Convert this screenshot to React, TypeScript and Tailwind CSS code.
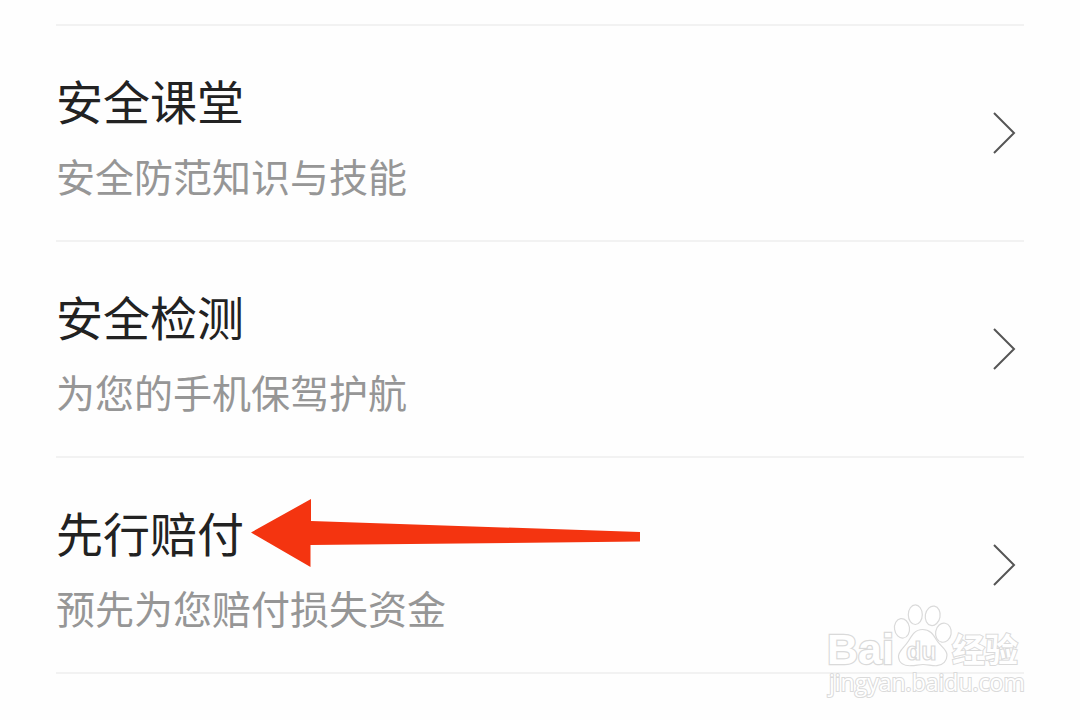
interface MenuItem {
  title: string;
  subtitle: string;
  href: string;
  highlighted?: boolean;
}

const items: MenuItem[] = [
  { title: "安全课堂", subtitle: "安全防范知识与技能", href: "#class" },
  { title: "安全检测", subtitle: "为您的手机保驾护航", href: "#check" },
  {
    title: "先行赔付",
    subtitle: "预先为您赔付损失资金",
    href: "#compensation",
    highlighted: true,
  },
];

const Chevron = () => (
  <svg
    width="24"
    height="44"
    viewBox="0 0 24 44"
    fill="none"
    stroke="#555555"
    strokeWidth="2"
    className="mr-2 flex-none"
    aria-hidden="true"
  >
    <path d="M2 2 22 22 2 42" />
  </svg>
);

const Arrow = () => (
  <svg
    width="390"
    height="68"
    viewBox="0 0 390 68"
    className="absolute top-[41px] left-[195px]"
    aria-hidden="true"
  >
    <path d="M0 33.5 60 0V22L389 33V42.5L59.5 46V68Z" fill="#f43410" />
  </svg>
);

const Watermark = () => (
  <svg
    width="204"
    height="100"
    viewBox="0 0 204 100"
    className="pointer-events-none absolute right-14 bottom-5 overflow-visible"
    fill="#ffffff"
    stroke="#dadada"
    strokeWidth="1.2"
    role="img"
    aria-label="Baidu经验"
  >
    <text
      x="7"
      y="64"
      fontSize="43"
      fontWeight="700"
      strokeWidth="2.5"
      paintOrder="stroke"
      fontFamily="'Liberation Sans', sans-serif"
    >
      Bai
    </text>
    <ellipse cx="82" cy="28.3" rx="7.5" ry="9.8" transform="rotate(-8 82 28.3)" />
    <ellipse cx="95.3" cy="14.7" rx="7" ry="9.8" />
    <ellipse cx="112.7" cy="15.8" rx="7.4" ry="9.8" transform="rotate(10 112.7 15.8)" />
    <ellipse cx="123.4" cy="32.7" rx="7.8" ry="9.6" transform="rotate(10 123.4 32.7)" />
    <path d="M102.500 29.500C95 29.500 92 35 88.500 41C84 48 78 51 78.500 57C79 63 84 66 91 65.700C96 65.500 99 64.500 103 64.500C108 64.500 112 66 117 65.700C123 65.300 127 61 127 55C127 49 120 46 116.500 40C113 34 110 29.500 102.500 29.500Z" />
    <text
      x="86"
      y="60"
      fontSize="25"
      fontWeight="700"
      fontFamily="'Liberation Sans', sans-serif"
    >
      du
    </text>
    <text
      x="132"
      y="62"
      fontSize="33"
      fontWeight="700"
      strokeWidth="2"
      paintOrder="stroke"
      fontFamily="'Noto Sans CJK SC', sans-serif"
    >
      经验
    </text>
    <text
      x="9"
      y="91"
      fontSize="23"
      strokeWidth="2"
      paintOrder="stroke"
      fontFamily="'Open Sans', sans-serif"
    >
      jingyan.baidu.com
    </text>
  </svg>
);

const MenuRow = ({ title, subtitle, href, highlighted }: MenuItem) => (
  <li className="relative border-b-2 border-[#f2f2f2]">
    <a href={href} className="flex items-center justify-between">
      <div className="pt-[34px] pb-[30px]">
        <h2 className="text-[47px] leading-[80px] text-[#222222]">{title}</h2>
        <p className="text-[39px] leading-[70px] text-[#969696]">{subtitle}</p>
      </div>
      <Chevron />
    </a>
    {highlighted && <Arrow />}
  </li>
);

export default function App() {
  return (
    <main className="relative min-h-screen bg-[#fefefe] px-14 pt-6 font-['Noto_Sans_CJK_SC',sans-serif]">
      <ul className="border-t-2 border-[#f2f2f2]">
        {items.map((item) => (
          <MenuRow key={item.title} {...item} />
        ))}
      </ul>
      <Watermark />
    </main>
  );
}
